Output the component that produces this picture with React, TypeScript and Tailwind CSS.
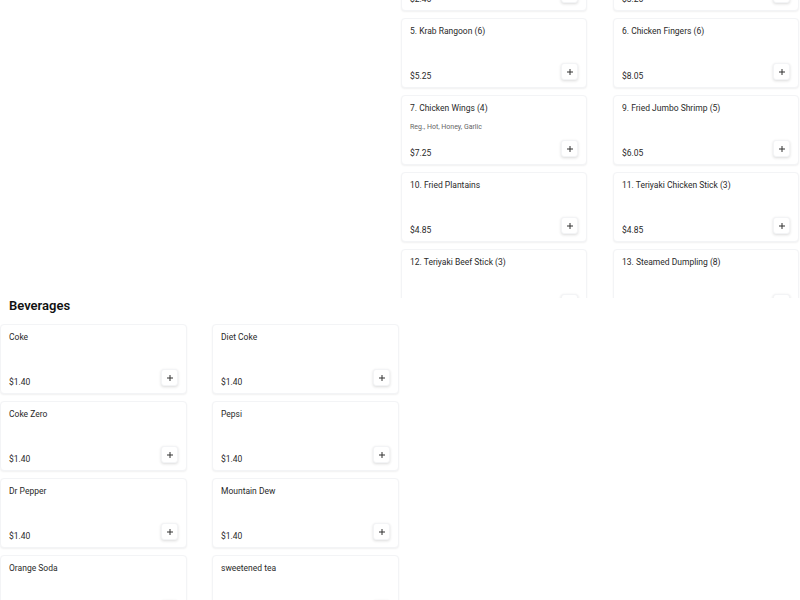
type Item = { name: string; price: string; desc?: string };

const appetizers: Item[] = [
  { name: '3. Egg Roll (2)', price: '$2.45' },
  { name: '4. Spring Roll (4)', price: '$3.25' },
  { name: '5. Krab Rangoon (6)', price: '$5.25' },
  { name: '6. Chicken Fingers (6)', price: '$8.05' },
  { name: '7. Chicken Wings (4)', price: '$7.25', desc: 'Reg., Hot, Honey, Garlic' },
  { name: '9. Fried Jumbo Shrimp (5)', price: '$6.05' },
  { name: '10. Fried Plantains', price: '$4.85' },
  { name: '11. Teriyaki Chicken Stick (3)', price: '$4.85' },
  { name: '12. Teriyaki Beef Stick (3)', price: '$4.85' },
  { name: '13. Steamed Dumpling (8)', price: '$7.25' },
];

const beverages: Item[] = [
  { name: 'Coke', price: '$1.40' },
  { name: 'Diet Coke', price: '$1.40' },
  { name: 'Coke Zero', price: '$1.40' },
  { name: 'Pepsi', price: '$1.40' },
  { name: 'Dr Pepper', price: '$1.40' },
  { name: 'Mountain Dew', price: '$1.40' },
  { name: 'Orange Soda', price: '$1.40' },
  { name: 'sweetened tea', price: '$1.40' },
];

function PlusButton() {
  return (
    <button className="flex h-[17px] w-[17px] items-center justify-center rounded-[3px] border border-gray-100 bg-white shadow-[0_1px_3px_rgba(0,0,0,0.14)]">
      <svg width="6" height="6" viewBox="0 0 6 6">
        <path d="M3 0v6M0 3h6" stroke="#333" strokeWidth="1" />
      </svg>
    </button>
  );
}

function Card({ item }: { item: Item }) {
  return (
    <div className="flex h-[70px] flex-col rounded-[4px] border border-gray-100 bg-white pb-[7px] pl-[8px] pr-[8px] pt-[6px] shadow-[0_1px_2px_rgba(0,0,0,0.06)]">
      <div className="text-[8.5px] leading-[12px] text-[#2a2a2a]">{item.name}</div>
      {item.desc && <div className="mt-[8px] text-[7px] leading-[10px] text-[#666]">{item.desc}</div>}
      <div className="mt-auto flex items-end justify-between">
        <div className="mb-[-2px] text-[8.5px] leading-[12px] text-[#2a2a2a]">{item.price}</div>
        <PlusButton />
      </div>
    </div>
  );
}

export default function App() {
  return (
    <div
      className="grid h-[600px] w-[800px] grid-cols-2 grid-rows-[298px_302px] overflow-hidden bg-white"
      style={{ fontFamily: 'Roboto, "Liberation Sans", sans-serif' }}
    >
      <div />
      {/* appetizers, scrolled */}
      <div className="overflow-hidden">
        <div className="mt-[-59px] grid grid-cols-[186px_186px] gap-x-[26px] gap-y-[7px] pl-[1px]">
          {appetizers.map((it) => (
            <Card key={it.name} item={it} />
          ))}
        </div>
      </div>
      <div className="overflow-hidden">
        <h2 className="h-[26px] pl-[9px] text-[13px] font-semibold leading-[15px] text-[#111]">Beverages</h2>
        <div className="grid grid-cols-[187px_187px] gap-x-[25px] gap-y-[7px]">
          {beverages.map((it) => (
            <Card key={it.name} item={it} />
          ))}
        </div>
      </div>
      <div />
    </div>
  );
}
